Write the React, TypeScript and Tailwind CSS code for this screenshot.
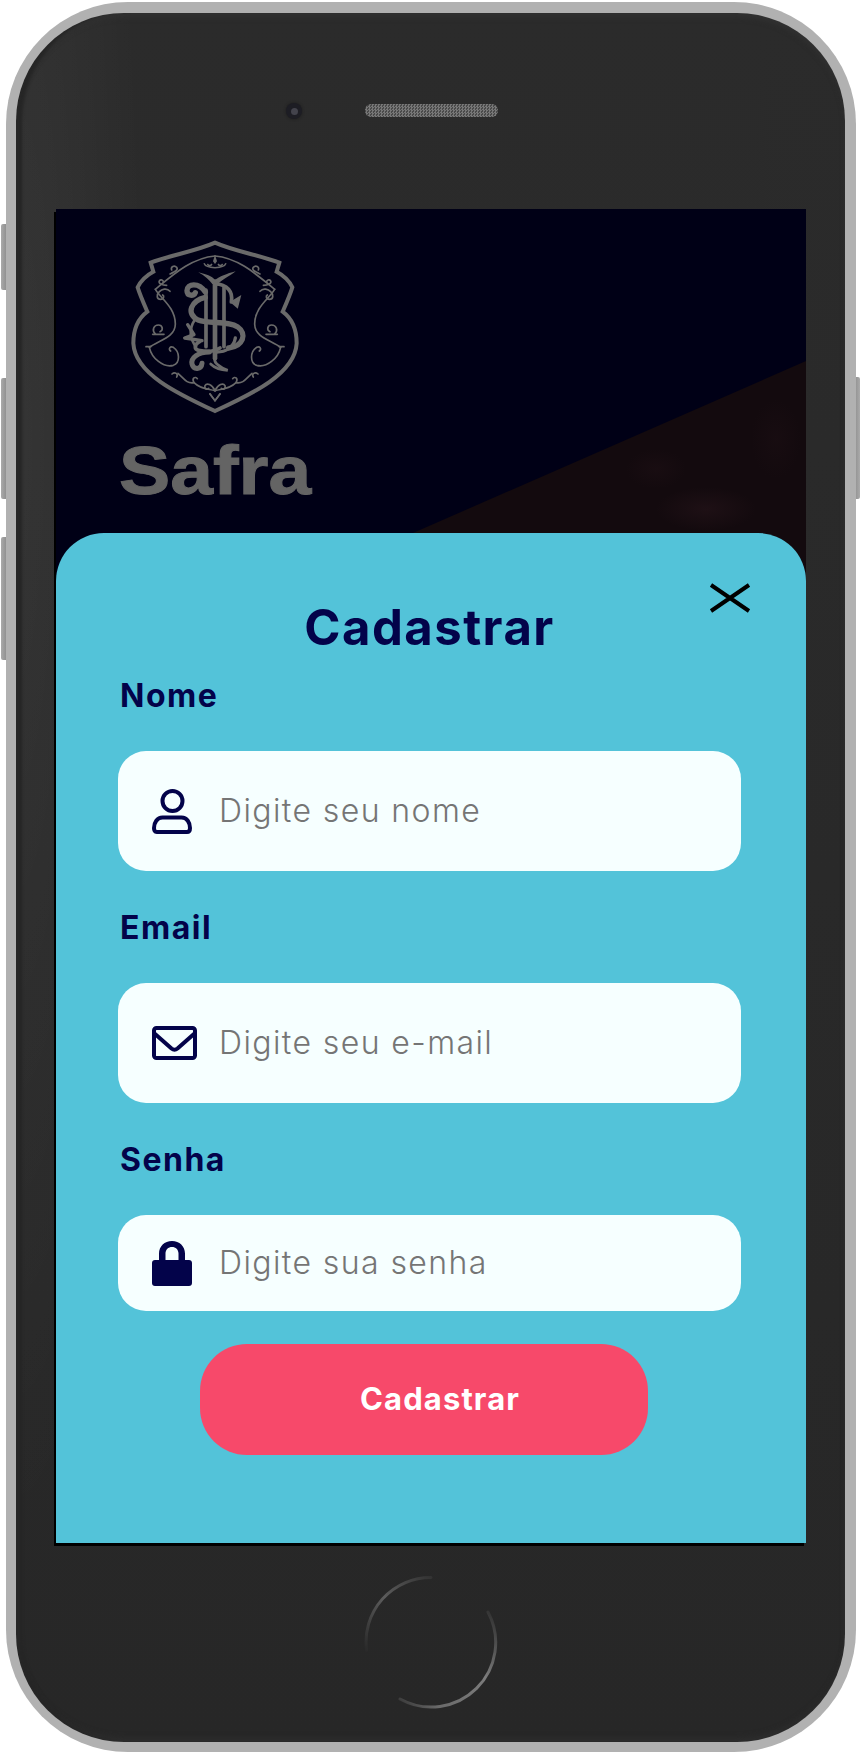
import React from "react";

const NAVY = "#03034a";

function Shield() {
  const half = (
    <g fill="none" stroke="#6a6a6a" strokeWidth="5" strokeLinecap="round">
      <path d="M285 78C215 84 162 132 106 178" />
      <path d="M150 132C165 125 176 120 170 112C163 104 151 110 155 120" />
      <path d="M140 166C126 166 114 160 118 153C122 147 131 150 130 157" />
      <path d="M150 184C140 172 125 178 118 185C108 195 110 208 122 208C131 208 134 199 128 195" />
      <path d="M106 178C122 205 166 232 166 282C166 322 118 330 88 352" />
      <path d="M106 312C94 300 102 285 115 285C128 285 131 300 120 305" />
      <path d="M98 313H132" />
      <path d="M78 350H92M88 352C95 385 130 414 160 406C181 399 180 365 160 352C150 347 144 358 152 363" />
      <path d="M156 432C165 424 176 432 170 441" />
      <path d="M174 430C192 446 200 462 222 458C214 444 226 438 232 446" />
      <path d="M222 458C242 478 262 476 285 482" />
      <path d="M285 482C276 462 260 458 255 467C252 475 260 481 266 475" />
      <path d="M270 492L285 512L300 492" />
    </g>
  );
  return (
    <svg viewBox="0 0 570 570" className="w-[190px] h-[190px] block">
      <path
        d="M285 38C345 65 420 75 478 98L470 125C490 135 510 155 517 172C510 195 498 222 488 245C515 265 530 300 530 340C525 430 400 490 285 543C170 490 45 430 40 340C40 300 55 265 82 245C72 222 60 195 53 172C60 155 80 135 100 125L92 98C150 75 225 65 285 38Z"
        fill="none"
        stroke="#6a6a6a"
        strokeWidth="12"
      />
      {half}
      <g transform="matrix(-1 0 0 1 570 0)">{half}</g>
      <path d="M285 74l-6 20 6 8 6-8z" fill="#6a6a6a" />
      <path d="M252 100c3 8 12 13 33 13s30-5 33-13M262 102c4 6 10 6 14 0M294 102c4 6 10 6 14 0" fill="none" stroke="#6a6a6a" strokeWidth="4.500" />
      <path d="M235 127C258 133 276 138 285 150C298 140 320 131 347 124C326 140 306 150 293 162L277 162C268 150 255 138 235 127Z" fill="#6a6a6a" />
      <g fill="none" stroke="#6a6a6a" strokeLinecap="round">
        <path d="M285 155V385" strokeWidth="14" />
        <path d="M258 180V350M312 172V350" strokeWidth="11" />
        <path d="M285 162C322 162 340 186 334 216" strokeWidth="11" />
        <path d="M285 366C318 368 342 350 346 324" strokeWidth="10" />
        <path d="M334 216L360 200L352 232Z" strokeWidth="5" fill="#6a6a6a" />
        <path d="M256 186C236 156 202 160 201 182C201 198 222 200 226 188" strokeWidth="16" />
        <path d="M256 202C214 212 196 250 234 270C270 284 320 270 352 290C384 312 368 350 326 354" strokeWidth="16" />
        <path d="M203 284L222 314L194 324L246 332" strokeWidth="10" strokeLinejoin="round" />
        <path d="M240 334C222 344 220 358 240 362C262 366 284 364 300 354" strokeWidth="11" />
        <path d="M268 366C234 366 212 384 216 402C220 420 244 420 246 400" strokeWidth="15" />
        <path d="M285 385C280 398 300 412 323 421C300 420 282 412 272 402" strokeWidth="8" />
        <path d="M228 350C212 330 204 300 224 270" strokeWidth="8" />
      </g>
    </svg>
  );
}

function UserIcon() {
  return (
    <svg viewBox="0 0 40 45" className="w-[40px] h-[45px]" fill="none" stroke={NAVY} strokeWidth="4">
      <circle cx="20.500" cy="12" r="10" />
      <path d="M10.500 28.500h19c5.500 0 8.500 5 8.500 10.500 0 2.600-.8 4-3 4H4.800c-2 0-2.800-1.400-2.800-4 0-5.500 3.200-10.500 8.500-10.500z" strokeLinejoin="round" />
    </svg>
  );
}

function MailIcon() {
  return (
    <svg viewBox="0 0 45 34" className="w-[45px] h-[34px]" fill="none" stroke={NAVY} strokeWidth="4">
      <rect x="2" y="2" width="41" height="30" rx="2.500" />
      <path d="M2.500 7.500L19.500 22.500c2 1.600 4 1.600 6 0L42.500 7.500" strokeLinejoin="round" />
    </svg>
  );
}

function LockIcon() {
  return (
    <svg viewBox="0 0 40 45" className="w-[40px] h-[45px]">
      <path
        fill={NAVY}
        fillRule="evenodd"
        d="M7 19v-6.500C7 5.300 12.500 0 20 0s13 5.300 13 12.500V19h4c1.800 0 3 1.200 3 3v20c0 1.800-1.200 3-3 3H3c-1.800 0-3-1.200-3-3V22c0-1.800 1.200-3 3-3zM13.500 19h13v-6.500c0-3.800-2.800-6.500-6.500-6.500s-6.500 2.700-6.500 6.500z"
      />
    </svg>
  );
}

function Field({ label, placeholder, icon, height, gapClass }: { label: string; placeholder: string; icon: React.ReactNode; height: string; gapClass: string }) {
  return (
    <div className={gapClass}>
      <div className="h-[36px] leading-[36px] pl-[2px] text-[32px] font-bold tracking-[1.500px]" style={{ color: NAVY }}>
        {label}
      </div>
      <div className={`mt-[37px] ${height} rounded-[28px] bg-[#f6ffff] flex items-center pl-[34px]`}>
        <span className="w-[67px] shrink-0 flex items-center">{icon}</span>
        <span className="text-[32px] text-[#757575] font-light tracking-[1.400px] whitespace-nowrap">{placeholder}</span>
      </div>
    </div>
  );
}

export default function App() {
  return (
    <div className="relative w-[861px] h-[1753px] bg-white overflow-hidden font-['Inter',sans-serif]">
      {/* side buttons */}
      <div className="absolute left-[1px] top-[224px] w-[6px] h-[66px] rounded-l-[2px] bg-[linear-gradient(90deg,#aaa,#8c8c8c)]" />
      <div className="absolute left-[1px] top-[378px] w-[6px] h-[121px] rounded-l-[2px] bg-[linear-gradient(90deg,#aaa,#8c8c8c)]" />
      <div className="absolute left-[1px] top-[537px] w-[6px] h-[123px] rounded-l-[2px] bg-[linear-gradient(90deg,#aaa,#8c8c8c)]" />
      <div className="absolute left-[854px] top-[377px] w-[6px] h-[122px] rounded-r-[2px] bg-[linear-gradient(90deg,#8c8c8c,#aaa)]" />

      <div className="relative ml-[6px] mt-[2px] w-[850px] h-[1750px] rounded-[122px] bg-[#b1b1b1] p-[11px_11px_10px_10px]">
        <div className="w-full h-full rounded-[108px] bg-[radial-gradient(ellipse_130px_1100px_at_0_25%,rgba(255,255,255,0.05),transparent),linear-gradient(180deg,#2b2b2b,#292929_50%,#272727)] shadow-[inset_8px_0_3px_-2px_#262626,inset_0_5px_6px_-2px_#333,inset_0_-6px_6px_-3px_#2e2e2e] flex flex-col">
          {/* camera and speaker */}
          <div className="h-[196px] pt-[88px] pl-[270px] flex items-start">
            <div className="mt-[2px] w-[16px] h-[16px] rounded-full bg-[#1d1d24] flex items-center justify-center shadow-[0_0_3px_#1a1a1a]">
              <div className="w-[7px] h-[7px] rounded-full bg-[#43434c]" />
            </div>
            <div className="ml-[63px] mt-[3px] w-[133px] h-[13px] rounded-[6px] bg-[repeating-conic-gradient(#777_0_25%,#4a4a4a_0_50%)] bg-[length:3px_3px]" />
          </div>

          {/* screen */}
          <div className="relative ml-[40px] w-[750px] h-[1334px] bg-[#000016] shadow-[-2px_3px_0_#000] flex flex-col">
            <svg className="absolute left-0 top-0 w-[750px] h-[400px]" viewBox="0 0 750 400">
              <defs>
                <radialGradient id="blot">
                  <stop offset="0" stopColor="#1e1015" />
                  <stop offset="1" stopColor="#1e1015" stopOpacity="0" />
                </radialGradient>
              </defs>
              <polygon points="750,152 357,324 357,400 750,400" fill="#130a0e" />
              <ellipse cx="650" cy="300" rx="50" ry="22" fill="url(#blot)" />
              <ellipse cx="600" cy="260" rx="30" ry="20" fill="url(#blot)" opacity="0.500" />
              <ellipse cx="720" cy="230" rx="25" ry="40" fill="url(#blot)" opacity="0.400" />
            </svg>
            <div className="relative h-[324px] pl-[64px] pt-[21px]">
              <Shield />
              <div className="mt-[16px] -ml-[1px] origin-left scale-x-[1.130] font-['Liberation_Sans',sans-serif] font-bold text-[68px] leading-[68px] text-[#646464] [-webkit-text-stroke:1px_#646464]">
                Safra
              </div>
            </div>

            {/* sheet */}
            <div className="relative flex-1 rounded-t-[48px] bg-[#53c3d9] pl-[62px] pr-[65px] pt-[67px]">
              <svg className="absolute left-[653px] top-[50px] w-[42px] h-[30px]" viewBox="0 0 42 30">
                <path d="M2 2L40 28M40 2L2 28" stroke="#000" strokeWidth="4" fill="none" />
              </svg>
              <div className="h-[56px] leading-[56px] text-center text-[49px] font-bold tracking-[1.500px]" style={{ color: NAVY }}>
                Cadastrar
              </div>
              <Field label="Nome" placeholder="Digite seu nome" icon={<UserIcon />} height="h-[120px]" gapClass="mt-[22px]" />
              <Field label="Email" placeholder="Digite seu e-mail" icon={<MailIcon />} height="h-[120px]" gapClass="mt-[39px]" />
              <Field label="Senha" placeholder="Digite sua senha" icon={<LockIcon />} height="h-[96px]" gapClass="mt-[39px]" />
              <div className="mt-[33px] ml-[82px] w-[448px] h-[111px] rounded-[47px] bg-[#f7496a] flex items-center justify-center pl-[32px] text-white text-[31px] font-bold tracking-[1.100px]">
                Cadastrar
              </div>
            </div>
          </div>

          {/* home button */}
          <div className="flex justify-center pt-[32px] pl-[1px]">
            <svg viewBox="0 0 134 134" className="w-[134px] h-[134px]" fill="none" strokeLinecap="round">
              <defs>
                <linearGradient id="hbA" x1="0" y1="1" x2="1" y2="0">
                  <stop offset="0" stopColor="#2a2a2a" />
                  <stop offset="0.500" stopColor="#5c5c5c" />
                  <stop offset="1" stopColor="#333" />
                </linearGradient>
                <linearGradient id="hbB" x1="1" y1="0" x2="0" y2="1">
                  <stop offset="0" stopColor="#2e2e2e" />
                  <stop offset="0.400" stopColor="#7c7c7c" />
                  <stop offset="0.800" stopColor="#6a6a6a" />
                  <stop offset="1" stopColor="#333" />
                </linearGradient>
              </defs>
              <path d="M2.500 75A64.500 64.500 0 0 1 67 2.500" stroke="url(#hbA)" strokeWidth="3" />
              <path d="M124 37A64.500 64.500 0 0 1 36 124" stroke="url(#hbB)" strokeWidth="3" />
            </svg>
          </div>
        </div>
      </div>
    </div>
  );
}
